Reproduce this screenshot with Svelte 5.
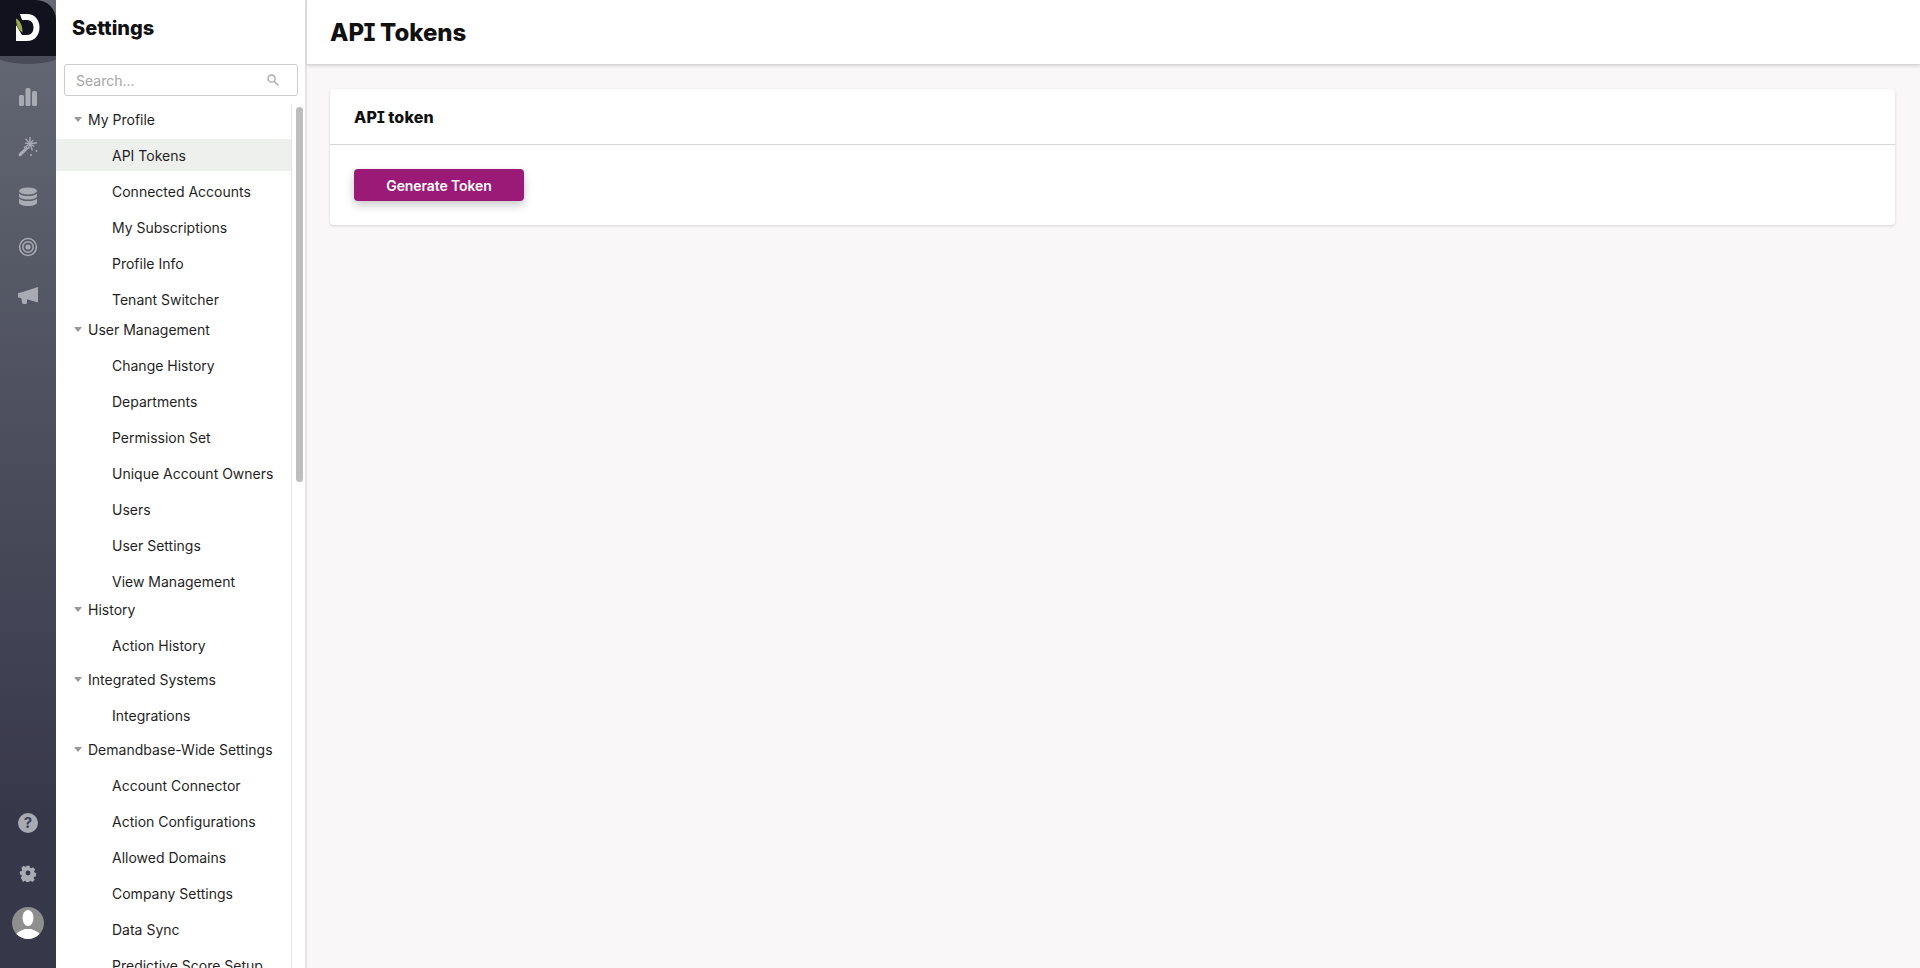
<script>
	const groups = [
		{ name: "My Profile", items: ["API Tokens", "Connected Accounts", "My Subscriptions", "Profile Info", "Tenant Switcher"] },
		{ name: "User Management", items: ["Change History", "Departments", "Permission Set", "Unique Account Owners", "Users", "User Settings", "View Management"] },
		{ name: "History", items: ["Action History"] },
		{ name: "Integrated Systems", items: ["Integrations"] },
		{ name: "Demandbase-Wide Settings", items: ["Account Connector", "Action Configurations", "Allowed Domains", "Company Settings", "Data Sync", "Predictive Score Setup"] }
	];
	const active = "API Tokens";
	// sparkle rays of the wand icon
	const rays = [0, 40, 80, 120, 160, 200, 240, 280, 320];
</script>

<div class="page">
	<nav class="rail">
		<div class="logo">
			<svg width="56" height="56" viewBox="0 0 56 56">
				<path fill="#fff" fill-rule="evenodd" d="M20 14h7c8 0 12.500 6 12.500 13.500S35 41 27 41H16V25l6 10h5c4.500 0 6.500-3.500 6.500-7.500S31.500 20 27 20h-5z" />
				<path fill="#9aa84a" d="M16 18.500c4 2 6.500 6.500 6.500 14-4-2.500-6.500-7-6.500-14z" />
			</svg>
		</div>
		<div class="rail-icons">
			<svg class="icon" viewBox="0 0 20 20">
				<rect x="1" y="8" width="5" height="11" rx="1.500" />
				<rect x="7.500" y="1" width="5" height="18" rx="1.500" />
				<rect x="14" y="4" width="5" height="15" rx="1.500" />
			</svg>
			<svg class="icon wand" viewBox="0 0 20 20">
				<path d="M1 16.500l7.500-7 2 2-7.500 7.500c-.6.500-1.400.400-1.900-.1s-.6-1.800-.1-2.400z" />
				{#each rays as r}
					<line x1="12" y1="7" x2="12" y2={r % 80 === 0 ? 0 : 2} transform="rotate({r} 12 7)" />
				{/each}
				<circle cx="13" cy="18" r="1" />
				<circle cx="18.500" cy="14" r="1" />
			</svg>
			<svg class="icon" viewBox="0 0 20 20">
				<ellipse cx="10" cy="4" rx="9" ry="3.500" />
				<path d="M1 6.500C3 8.500 6 9 10 9s7-.5 9-2.500V9c0 2-4 3.500-9 3.500S1 11 1 9z" />
				<path d="M1 11.500c2 2 5 2.500 9 2.500s7-.5 9-2.500V15.500c0 2-4 3.500-9 3.500s-9-1.500-9-3.500z" />
			</svg>
			<svg class="icon" viewBox="0 0 20 20">
				<circle class="ring" cx="10" cy="10" r="8.400" />
				<circle class="ring" cx="10" cy="10" r="5.200" />
				<circle cx="10" cy="10" r="2.600" />
			</svg>
			<svg class="icon" viewBox="0 0 20 20">
				<path d="M0 6l3-.5L20 0v15.500L9 12.300V15.500c0 1-.8 1.500-1.500 1.500H5.500c-.8 0-1.300-.5-1.500-1.200L3.300 11 0 10.500z" />
			</svg>
		</div>
		<div class="rail-bottom">
			<svg class="icon help" viewBox="0 0 20 20">
				<circle cx="10" cy="10" r="10" />
				<text x="10" y="15" text-anchor="middle">?</text>
			</svg>
			<svg class="icon gear" viewBox="0 0 20 20">
				<path fill-rule="evenodd" d="M8 1h4l.5 2.500 1.500.7 2.200-1.300 2.700 2.900-1.400 2.100.5 1.500 2 .6v4l-2.400.6-.6 1.500 1.300 2.100-2.800 2.800-2.100-1.300-1.500.6-.6 2.300H8l-.5-2.300-1.500-.6-2.100 1.300L1.100 16l1.300-2.100-.6-1.500L0 12V8l2.300-.5.600-1.500-1.300-2.100 2.800-2.800 2.100 1.300 1.500-.6zM10 7a3 3 0 1 0 0 6 3 3 0 0 0 0-6z" transform="translate(1 1) scale(.9)" />
			</svg>
			<div class="avatar">
				<svg viewBox="0 0 32 32" width="32" height="32">
					<ellipse cx="16" cy="11" rx="5.500" ry="8" fill="#fff" />
					<path fill="#fff" d="M3 32c0-7 5-8 10-10h6c5 2 10 3 10 10z" />
				</svg>
			</div>
		</div>
	</nav>

	<aside class="sidebar">
		<h2>Settings</h2>
		<div class="search">
			<input type="text" placeholder="Search..." />
			<svg width="12" height="12" viewBox="0 0 12 12" fill="none" stroke="#a8a8a8" stroke-width="1.300">
				<circle cx="4.600" cy="4.600" r="3.600" />
				<path d="M7.200 7.200L11.500 11.500" />
			</svg>
		</div>
		<div class="tree-wrap">
			<div class="tree">
				{#each groups as group}
					<section class="group">
						<div class="group-name"><span class="caret"></span>{group.name}</div>
						{#each group.items as item}
							<div class="item" class:active={item === active}>{item}</div>
						{/each}
					</section>
				{/each}
			</div>
			<div class="track"><div class="thumb"></div></div>
		</div>
	</aside>

	<main>
		<header><h1>AP<span class="slab">I</span> Tokens</h1></header>
		<div class="content">
			<div class="card">
				<div class="card-title"><span>AP<span class="slab">I</span> token</span></div>
				<div class="card-body">
					<button>Generate Token</button>
				</div>
			</div>
		</div>
	</main>
</div>

<style>
	:global(body) {
		font-family: Inter, "Liberation Sans", sans-serif;
		color: #1f1f1f;
	}

	.page {
		display: flex;
		height: 968px;
		overflow: hidden;
	}

	.rail {
		width: 56px;
		flex: none;
		display: flex;
		flex-direction: column;
		align-items: center;
		background: linear-gradient(#666a76, #545764 30%, #37374a 85%);
		position: relative;
		overflow: hidden;
	}

	/* soft arc under the logo block */
	.rail::before {
		content: "";
		position: absolute;
		left: -8px;
		right: -8px;
		top: 40px;
		height: 24px;
		border-radius: 50%;
		background: rgba(18, 18, 31, 0.3);
	}

	.logo {
		width: 56px;
		height: 56px;
		flex: none;
		background: #12121f;
		border-top-right-radius: 20px;
		position: relative;
	}

	.logo svg {
		display: block;
	}

	.rail-icons {
		display: flex;
		flex-direction: column;
		align-items: center;
		gap: 30px;
		margin-top: 31px;
		position: relative;
	}

	.rail-bottom {
		margin-top: auto;
		margin-bottom: 29px;
		display: flex;
		flex-direction: column;
		align-items: center;
		gap: 30px;
	}

	.icon {
		width: 20px;
		height: 20px;
		fill: #a9abb4;
		display: block;
	}

	.wand line {
		stroke: #a9abb4;
		stroke-width: 1.400;
	}

	.ring {
		fill: none;
		stroke: #a9abb4;
		stroke-width: 1.500;
	}

	.help text {
		font: 700 15px Inter, sans-serif;
		fill: #3d3d50;
	}

	.gear {
		width: 18px;
		height: 18px;
		margin: 1px 0;
	}

	.avatar {
		width: 32px;
		height: 32px;
		margin-top: -6px;
		border-radius: 50%;
		background: #8e8e8e;
		overflow: hidden;
	}

	.avatar svg {
		display: block;
	}

	.sidebar {
		width: 249px;
		flex: none;
		display: flex;
		flex-direction: column;
		background: #fff;
		border-right: 2px solid #e4e4e4;
	}

	h2 {
		margin: 0;
		padding: 16px 0 0 16px;
		height: 48px;
		box-sizing: border-box;
		font-size: 20px;
		line-height: 24px;
		font-weight: 800;
		color: #111;
	}

	.search {
		margin: 16px 8px 0;
		height: 32px;
		width: 234px;
		box-sizing: border-box;
		border: 1px solid #ccc;
		border-radius: 3px;
		display: flex;
		align-items: center;
		padding: 0 18px 0 11px;
	}

	.search input {
		flex: 1;
		min-width: 0;
		border: none;
		outline: none;
		padding: 0;
		font: 14px Inter, sans-serif;
	}

	.search input::placeholder {
		color: #a6a6a6;
	}

	.tree-wrap {
		flex: 1;
		min-height: 0;
		display: flex;
		margin-top: 9px;
	}

	.tree {
		width: 236px;
		flex: none;
		box-sizing: border-box;
		border-right: 1px solid #e4e4e4;
		overflow: hidden;
	}

	.group:nth-child(1) {
		margin-bottom: -4px;
	}

	.group:nth-child(2) {
		margin-bottom: -6px;
	}

	.group-name {
		height: 28px;
		display: flex;
		align-items: center;
		padding-left: 18px;
		font-size: 14px;
		margin-bottom: 6px;
	}

	.caret {
		width: 0;
		height: 0;
		margin-right: 6px;
		border-left: 4.500px solid transparent;
		border-right: 4.500px solid transparent;
		border-top: 5px solid #999;
	}

	.item {
		height: 32px;
		margin-bottom: 4px;
		display: flex;
		align-items: center;
		padding-left: 56px;
		font-size: 14px;
	}

	.item.active {
		background: #eef0ee;
	}

	.track {
		flex: 1;
		padding: 0 2px 0 4px;
	}

	.thumb {
		height: 375px;
		margin-top: 2px;
		background: #bdbdbd;
		border-radius: 4px;
	}

	main {
		flex: 1;
		min-width: 0;
		display: flex;
		flex-direction: column;
		background: #f9f7f8;
	}

	header {
		height: 65px;
		flex: none;
		background: #fff;
		border-bottom: 1px solid #d8d8d8;
		box-shadow: 0 1px 3px rgba(0, 0, 0, 0.15);
		display: flex;
		align-items: center;
		padding-left: 23px;
		box-sizing: border-box;
	}

	h1 {
		margin: 0;
		font-size: 24px;
		font-weight: 800;
		color: #111;
	}

	/* the heading face has a serifed capital I, Inter does not */
	.slab {
		font-family: "DejaVu Sans Mono", monospace;
		font-weight: 700;
		margin: 0 -0.08em;
	}

	.content {
		padding: 24px 25px 0 23px;
	}

	.card {
		background: #fff;
		border-radius: 4px;
		box-shadow: 0 1px 3px rgba(0, 0, 0, 0.15);
	}

	.card-title {
		height: 56px;
		box-sizing: border-box;
		border-bottom: 1px solid #d6d6d6;
		display: flex;
		align-items: center;
		padding-left: 24px;
		font-size: 16px;
		font-weight: 800;
		letter-spacing: 0.2px;
		color: #111;
	}

	.card-body {
		padding: 24px;
	}

	button {
		display: block;
		width: 170px;
		height: 32px;
		border: none;
		border-radius: 4px;
		background: #9b1a78;
		color: #fff;
		font: 600 14px Inter, sans-serif;
		letter-spacing: -0.1px;
		box-shadow: 0 4px 10px rgba(0, 0, 0, 0.22);
		cursor: pointer;
	}
</style>
